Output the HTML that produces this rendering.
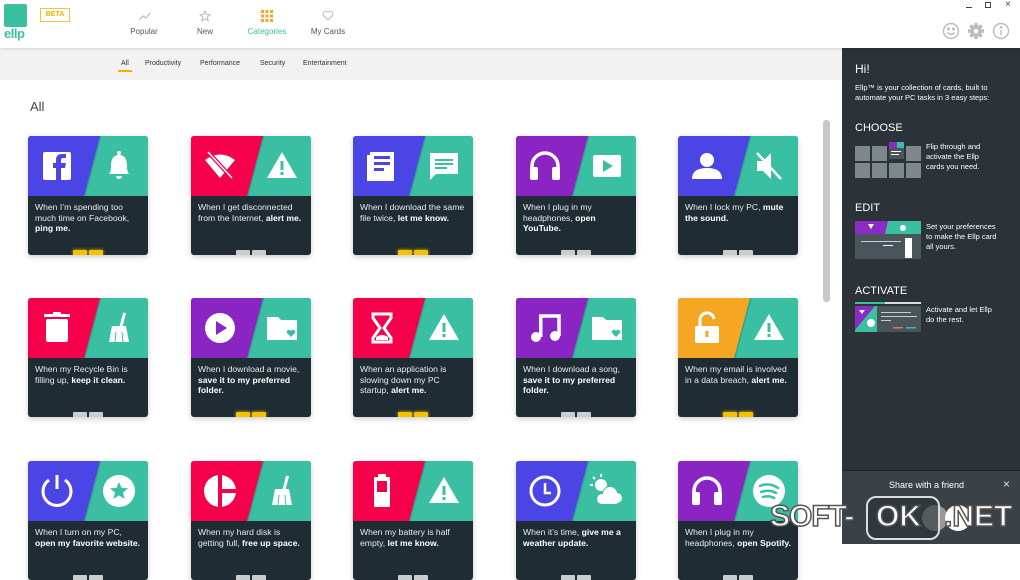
<!DOCTYPE html>
<html><head><meta charset="utf-8">
<style>
*{margin:0;padding:0;box-sizing:border-box}
body{width:1020px;height:544px;overflow:hidden;background:#fff;font-family:"Liberation Sans",sans-serif;position:relative}
.top{position:absolute;left:0;top:0;width:1020px;height:48px;background:#fff;box-shadow:0 1px 3px rgba(0,0,0,.12);z-index:3}
.logo{position:absolute;left:4px;top:4px;width:23px;height:23px;background:#3bbfa3;border-radius:2px}
.logot{position:absolute;left:4px;top:26px;color:#3bbfa3;font-size:13px;font-weight:bold;letter-spacing:-0.5px}
.beta{position:absolute;left:40px;top:8px;width:30px;height:14px;border:1px solid #f5c342;color:#f5b100;font-size:7px;font-weight:bold;text-align:center;line-height:12px}
.nav{position:absolute;top:27px;font-size:8px;color:#555;text-align:center;width:60px}
.nav.on{color:#3bbfa3}
.filt{position:absolute;left:0;top:48px;width:842px;height:32px;background:#f2f2f2}
.filt span{position:absolute;top:12px;font-size:7px;color:#333}
.main{position:absolute;left:0;top:80px;width:842px;height:464px;background:#fff}
.side{position:absolute;left:842px;top:48px;width:178px;height:496px;background:#2b3338;color:#fff}
.card{position:absolute;width:120px;height:119px;background:#1f2c33;border-radius:3px;overflow:hidden;box-shadow:0 2px 6px rgba(0,0,0,.2)}
.card svg.bg{position:absolute;left:0;top:0}
.card .t{position:absolute;left:7px;top:66px;width:106px;font-size:8.6px;line-height:10.5px;color:#e8ecee}
.card .t b{color:#fff}
.ind{position:absolute;bottom:0;left:45px;width:30px;height:5px;display:flex;gap:2px}
.ind i{display:block;width:14px;height:5px;border-radius:1px 1px 0 0}
.y i{background:#f5c000;box-shadow:0 0 3px #f5c000}
.g i{background:#c8cdd0}
</style></head><body>
<div class="top">
<div class="logo"></div><div class="logot">ellp</div>
<div class="beta">BETA</div>
<svg style="position:absolute;left:138px;top:11px" width="13" height="10"><polyline points="1,9 5,5 8,7 12,2" fill="none" stroke="#bbb" stroke-width="1.2"/></svg>
<div class="nav" style="left:114px">Popular</div>
<svg style="position:absolute;left:199px;top:10px" width="12" height="12"><polygon points="6,1 7.5,4.5 11,4.7 8.3,7 9.2,10.8 6,8.7 2.8,10.8 3.7,7 1,4.7 4.5,4.5" fill="none" stroke="#bbb" stroke-width="1"/></svg>
<div class="nav" style="left:175px">New</div>
<svg style="position:absolute;left:261px;top:10px" width="12" height="12" fill="#f5a623"><rect x="0" y="0" width="3" height="3"/><rect x="4.5" y="0" width="3" height="3"/><rect x="9" y="0" width="3" height="3"/><rect x="0" y="4.5" width="3" height="3"/><rect x="4.5" y="4.5" width="3" height="3"/><rect x="9" y="4.5" width="3" height="3"/><rect x="0" y="9" width="3" height="3"/><rect x="4.5" y="9" width="3" height="3"/><rect x="9" y="9" width="3" height="3"/></svg>
<div class="nav on" style="left:237px">Categories</div>
<svg style="position:absolute;left:322px;top:10px" width="12" height="11"><path d="M6 10 L1.5 5.5 A2.6 2.6 0 0 1 6 2.5 A2.6 2.6 0 0 1 10.5 5.5 Z" fill="none" stroke="#bbb" stroke-width="1"/></svg>
<div class="nav" style="left:298px">My Cards</div>
<div style="position:absolute;left:966px;top:7px;width:6px;height:1px;background:#444"></div>
<div style="position:absolute;left:985px;top:2px;width:6px;height:6px;border:1px solid #444"></div>
<div style="position:absolute;left:1005px;top:-1px;font-size:10px;color:#444">×</div>
<svg style="position:absolute;left:942px;top:22px" width="78" height="18" fill="none" stroke="#bbb" stroke-width="1.4">
<circle cx="9" cy="9" r="7.5"/><circle cx="6.5" cy="7" r=".8" fill="#bbb"/><circle cx="11.5" cy="7" r=".8" fill="#bbb"/><path d="M5.5 10.5 Q9 14 12.5 10.5"/>
<g transform="translate(34,9)" fill="#bbb" stroke="none"><circle r="5.5"/><rect x="-1.8" y="-8" width="3.6" height="16"/><rect x="-1.8" y="-8" width="3.6" height="16" transform="rotate(45)"/><rect x="-1.8" y="-8" width="3.6" height="16" transform="rotate(90)"/><rect x="-1.8" y="-8" width="3.6" height="16" transform="rotate(135)"/><circle r="2.3" fill="#fff"/></g>
<circle cx="59" cy="9" r="7.5"/><line x1="59" y1="8" x2="59" y2="13"/><circle cx="59" cy="5.3" r=".6" fill="#bbb"/>
</svg>
</div>
<div class="filt">
<span style="left:121px">All</span><div style="position:absolute;left:118px;top:22px;width:14px;height:2px;background:#f5b100"></div>
<span style="left:145px">Productivity</span><span style="left:200px">Performance</span><span style="left:260px">Security</span><span style="left:303px">Entertainment</span>
</div>
<div class="main">
<div style="position:absolute;left:30px;top:19px;font-size:13px;color:#444">All</div>
<div style="position:absolute;left:823px;top:40px;width:7px;height:182px;background:#c8c8c8;border-radius:3px"></div>
</div>
<div id="cards"></div>
<div class="side">
<div style="position:absolute;left:13px;top:14px;font-size:12px">Hi!</div>
<div style="position:absolute;left:13px;top:35px;font-size:7.5px;line-height:10px;width:160px">Ellp™ is your collection of cards, built to automate your PC tasks in 3 easy steps:</div>
<div style="position:absolute;left:13px;top:74px;font-size:11px">CHOOSE</div>
<svg style="position:absolute;left:13px;top:94px" width="66" height="42"><g fill="#7d878c"><rect x="0" y="4" width="15" height="15"/><rect x="17" y="4" width="15" height="15"/><rect x="51" y="4" width="15" height="15"/><rect x="0" y="21" width="15" height="15"/><rect x="17" y="21" width="15" height="15"/><rect x="34" y="21" width="15" height="15"/><rect x="51" y="21" width="15" height="15"/></g><rect x="34" y="0" width="15" height="17" fill="#4a555b"/><rect x="34" y="0" width="8" height="6" fill="#8a2bc4"/><rect x="42" y="0" width="7" height="6" fill="#3bbfa3"/><rect x="36" y="9" width="10" height="1" fill="#fff"/><rect x="36" y="12" width="8" height="1" fill="#fff"/></svg>
<div style="position:absolute;left:84px;top:94px;font-size:7.5px;line-height:10px">Flip through and<br>activate the Ellp<br>cards you need.</div>
<div style="position:absolute;left:13px;top:154px;font-size:11px">EDIT</div>
<svg style="position:absolute;left:13px;top:173px" width="66" height="38"><rect width="66" height="38" fill="#4a555b"/><polygon points="0,0 33,0 30,13 0,13" fill="#8a2bc4"/><polygon points="33,0 66,0 66,13 30,13" fill="#3bbfa3"/><polygon points="13,3 19,3 16,8" fill="#fff"/><circle cx="48" cy="7" r="3" fill="#fff"/><rect x="6" y="20" width="40" height="1" fill="#ccd"/><rect x="50" y="17" width="7" height="20" fill="#fff"/><rect x="28" y="24" width="10" height="1" fill="#fff"/></svg>
<div style="position:absolute;left:84px;top:174px;font-size:7.5px;line-height:10px">Set your preferences<br>to make the Ellp card<br>all yours.</div>
<div style="position:absolute;left:13px;top:237px;font-size:11px">ACTIVATE</div>
<svg style="position:absolute;left:13px;top:254px" width="66" height="30"><rect width="66" height="2" fill="#ddd"/><rect width="30" height="2" fill="#3bbfa3"/><rect y="4" width="66" height="26" fill="#4a555b"/><polygon points="0,4 20,4 0,28" fill="#8a2bc4"/><polygon points="20,4 22,4 22,30 0,30 0,28" fill="#3bbfa3"/><circle cx="16" cy="21" r="4" fill="#fff"/><polygon points="4,8 10,8 7,12" fill="#fff"/><rect x="26" y="10" width="30" height="1" fill="#ccc"/><rect x="26" y="14" width="36" height="1" fill="#ccc"/><rect x="26" y="18" width="10" height="1" fill="#ccc"/><rect x="38" y="25" width="10" height="1.5" fill="#e07060"/><rect x="51" y="25" width="10" height="1.5" fill="#3bbfa3"/></svg>
<div style="position:absolute;left:84px;top:257px;font-size:7.5px;line-height:10px">Activate and let Ellp<br>do the rest.</div>
<div style="position:absolute;left:0;top:422px;width:178px;height:74px;background:#3a4247;border-top:1px solid #222"></div>
<div style="position:absolute;left:47px;top:432px;font-size:9px">Share with a friend</div>
<div style="position:absolute;left:161px;top:429px;font-size:12px;color:#ddd">×</div>
<div style="position:absolute;left:80px;top:457px;width:26px;height:26px;border-radius:50%;background:#9a9a9a"></div>
<div style="position:absolute;left:103px;top:457px;width:26px;height:26px;border-radius:50%;background:#fff"></div>
</div>
<div style="position:absolute;left:770px;top:500px;font-size:30px;color:#fff;-webkit-text-stroke:1.5px #555;font-weight:bold;letter-spacing:-1px">SOFT-</div>
<div style="position:absolute;left:866px;top:496px;width:74px;height:44px;border:2px solid #ddd;border-radius:10px;background:rgba(40,50,55,.6)"></div>
<div style="position:absolute;left:876px;top:500px;font-size:30px;color:#fff;-webkit-text-stroke:1.5px #555;font-weight:bold">OK</div>
<div style="position:absolute;left:944px;top:500px;font-size:30px;color:#fff;-webkit-text-stroke:1.5px #555;font-weight:bold">.NET</div>
<script>
const C={b:"#4b45e6",p:"#8a24c2",r:"#f5004a",o:"#f5a623",t:"#3bbfa3"};
const I={
fb:'<rect x="-14" y="-14" width="28" height="28" rx="2" fill="#fff"/><path d="M4 14 V2 H8 L9 -3 H4 V-6 Q4 -8 6 -8 H9 V-12 H5 Q-1 -12 -1 -6 V-3 H-4 V2 H-1 V14Z" fill="CL"/>',
bell:'<path d="M-10 8 Q-8 6 -8 0 Q-8 -11 0 -11 Q8 -11 8 0 Q8 6 10 8Z" fill="#fff"/><circle cx="0" cy="-13" r="2" fill="#fff"/><path d="M-3 10 A3 3 0 0 0 3 10Z" fill="#fff"/>',
warn:'<path d="M0 -14 L15 12 H-15Z" fill="#fff"/><rect x="-1.5" y="-5" width="3" height="9" fill="CL"/><rect x="-1.5" y="6" width="3" height="3" fill="CL"/>',
wifi:'<path d="M-15 -6 Q0 -17 15 -6 L0 12Z" fill="#fff"/><line x1="-12" y1="-14" x2="12" y2="12" stroke="CL" stroke-width="4"/><line x1="-12" y1="-14" x2="12" y2="12" stroke="#fff" stroke-width="1.6"/>',
news:'<rect x="-12" y="-14" width="24" height="26" fill="#fff"/><rect x="-15" y="-11" width="3" height="26" fill="#fff"/><rect x="-12" y="12" width="24" height="3" fill="#fff"/><g fill="CL"><rect x="-8" y="-10" width="16" height="3"/><rect x="-8" y="-4" width="16" height="3"/><rect x="-8" y="2" width="10" height="3"/></g>',
chat:'<path d="M-14 -13 H14 V8 H-8 L-14 14Z" fill="#fff"/><g fill="CL"><rect x="-9" y="-7" width="18" height="2"/><rect x="-9" y="-3" width="18" height="2"/><rect x="-9" y="1" width="12" height="2"/></g>',
head:'<path d="M-13 10 V0 A13 13 0 0 1 13 0 V10" fill="none" stroke="#fff" stroke-width="3.5"/><rect x="-15" y="1" width="8" height="13" rx="2" fill="#fff"/><rect x="7" y="1" width="8" height="13" rx="2" fill="#fff"/>',
yt:'<rect x="-14" y="-11" width="28" height="22" rx="2" fill="#fff"/><path d="M-4 -6 L6 0 L-4 6Z" fill="CL"/>',
user:'<circle cx="0" cy="-6" r="7" fill="#fff"/><path d="M-15 13 Q-15 2 0 2 Q15 2 15 13Z" fill="#fff"/>',
mute:'<path d="M-12 -5 H-6 L2 -13 V13 L-6 5 H-12Z" fill="#fff"/><line x1="-12" y1="-13" x2="12" y2="13" stroke="#fff" stroke-width="2.5"/>',
bin:'<rect x="-11" y="-9" width="22" height="23" rx="2" fill="#fff"/><rect x="-13" y="-14" width="26" height="3" fill="#fff"/><rect x="-4" y="-16" width="8" height="3" fill="#fff"/>',
broom:'<rect x="0" y="-16" width="3" height="14" fill="#fff" transform="rotate(15)"/><path d="M-7 -2 H7 L10 14 H-10Z" fill="#fff"/><g stroke="CL" stroke-width="1"><line x1="-3" y1="4" x2="-4" y2="14"/><line x1="3" y1="4" x2="4" y2="14"/></g>',
play:'<circle r="15" fill="#fff"/><path d="M-4 -7 L7 0 L-4 7Z" fill="CL"/>',
folder:'<path d="M-15 -11 H-4 L-1 -8 H15 V12 H-15Z" fill="#fff"/><path d="M9 9 L5 5 A2 2 0 0 1 9 3 A2 2 0 0 1 13 5Z" fill="CL"/>',
hour:'<path d="M-9 -14 H9 V-10 L2 0 L9 10 V14 H-9 V10 L-2 0 L-9 -10Z" fill="none" stroke="#fff" stroke-width="3"/><path d="M-6 12 H6 V9 Q0 5 -6 9Z" fill="#fff"/>',
note:'<path d="M-6 -12 H14 V8" fill="none" stroke="#fff" stroke-width="3.5"/><circle cx="-9" cy="9" r="5" fill="#fff"/><circle cx="10" cy="8" r="5" fill="#fff"/><rect x="-6" y="-12" width="3.5" height="21" fill="#fff"/>',
lock:'<rect x="-12" y="-2" width="24" height="17" rx="2" fill="#fff"/><path d="M-7 -2 V-7 A7 7 0 0 1 7 -9" fill="none" stroke="#fff" stroke-width="3"/><rect x="-1.5" y="3" width="3" height="6" fill="CL"/>',
power:'<path d="M-8 -11 A14 14 0 1 0 8 -11" fill="none" stroke="#fff" stroke-width="3"/><rect x="-1.5" y="-16" width="3" height="14" fill="#fff"/>',
star:'<circle r="16" fill="#fff"/><polygon points="0,-9 2.6,-3 9,-2.8 4,1.5 5.6,8 0,4.4 -5.6,8 -4,1.5 -9,-2.8 -2.6,-3" fill="CL"/>',
pie:'<circle r="16" fill="#fff"/><rect x="-2" y="-16" width="4" height="32" fill="CL"/><rect x="0" y="-2" width="16" height="4" fill="CL"/>',
batt:'<rect x="-4" y="-17" width="8" height="4" fill="#fff"/><rect x="-8" y="-14" width="16" height="30" rx="1" fill="#fff"/><rect x="-5" y="-10" width="10" height="11" fill="CL"/>',
clock:'<circle r="14" fill="none" stroke="#fff" stroke-width="3"/><path d="M0 -8 V2 H6" fill="none" stroke="#fff" stroke-width="2.5"/>',
cloud:'<circle cx="-6" cy="-6" r="6" fill="#fff"/><g stroke="#fff" stroke-width="2"><line x1="-6" y1="-17" x2="-6" y2="-14"/><line x1="-17" y1="-6" x2="-14" y2="-6"/><line x1="-14" y1="-14" x2="-12" y2="-12"/></g><circle cx="3" cy="3" r="8" fill="CL"/><circle cx="3" cy="3" r="7" fill="#fff"/><circle cx="-5" cy="8" r="5" fill="#fff"/><circle cx="10" cy="7" r="5" fill="#fff"/><rect x="-5" y="6" width="15" height="7" fill="#fff"/>',
spot:'<circle r="16" fill="#fff"/><g fill="none" stroke="CL" stroke-width="2.5" stroke-linecap="round"><path d="M-9 -5 Q0 -9 9 -3"/><path d="M-8 1 Q0 -2 7 2"/><path d="M-6 6 Q0 4 5 7"/></g>'
};
const R=[
[["b","fb","bell","When I’m spending too much time on Facebook, <b>ping me.</b>","y"],["r","wifi","warn","When I get disconnected from the Internet, <b>alert me.</b>","g"],["b","news","chat","When I download the same file twice, <b>let me know.</b>","y"],["p","head","yt","When I plug in my headphones, <b>open YouTube.</b>","g"],["b","user","mute","When I lock my PC, <b>mute the sound.</b>","g"]],
[["r","bin","broom","When my Recycle Bin is filling up, <b>keep it clean.</b>","g"],["p","play","folder","When I download a movie, <b>save it to my preferred folder.</b>","y"],["r","hour","warn","When an application is slowing down my PC startup, <b>alert me.</b>","y"],["p","note","folder","When I download a song, <b>save it to my preferred folder.</b>","g"],["o","lock","warn","When my email is involved in a data breach, <b>alert me.</b>","y"]],
[["b","power","star","When I turn on my PC, <b>open my favorite website.</b>","g"],["r","pie","broom","When my hard disk is getting full, <b>free up space.</b>","g"],["r","batt","warn","When my battery is half empty, <b>let me know.</b>","g"],["b","clock","cloud","When it’s time, <b>give me a weather update.</b>","g"],["p","head","spot","When I plug in my headphones, <b>open Spotify.</b>","g"]]];
const X=[28,191,353,516,678],Y=[136,298,461];let h="";
R.forEach((row,ri)=>row.forEach((c,ci)=>{const L=C[c[0]],T=C.t;
h+=`<div class="card" style="left:${X[ci]}px;top:${Y[ri]}px"><svg class="bg" width="120" height="60"><rect width="120" height="60" fill="${T}"/><polygon points="0,0 72,0 56,60 0,60" fill="${L}"/><polygon points="72,0 73.5,0 57.5,60 56,60" fill="rgba(0,0,0,.15)"/><g transform="translate(29,30)">${I[c[1]].replace(/CL/g,L)}</g><g transform="translate(91,30)">${I[c[2]].replace(/CL/g,T)}</g></svg><div class="t">${c[3]}</div><div class="ind ${c[4]}"><i></i><i></i></div></div>`;}));
document.getElementById("cards").innerHTML=h;
</script>
</body></html>
